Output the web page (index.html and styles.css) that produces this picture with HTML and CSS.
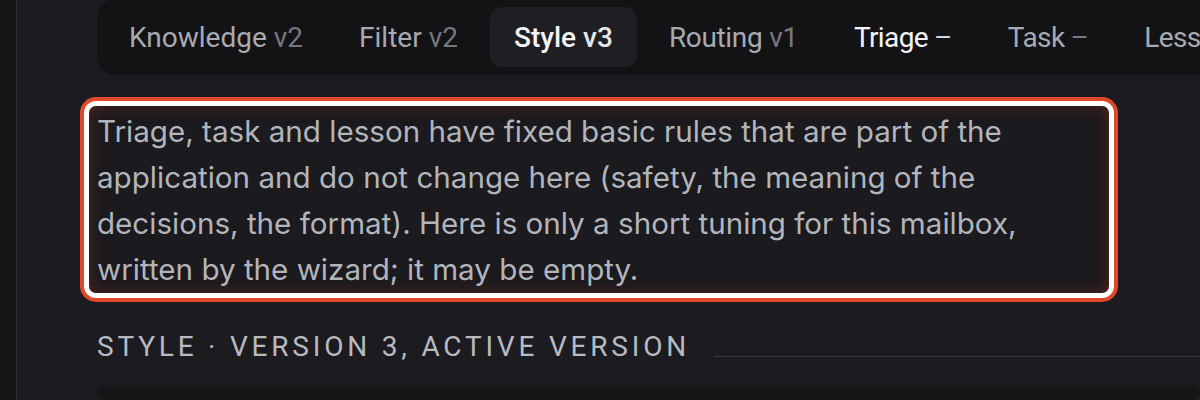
FILE: index.html
```html
<!DOCTYPE html>
<html lang="en">
<head>
<meta charset="utf-8">
<title>Prompts</title>
<link rel="stylesheet" href="styles.css">
</head>
<body>
<div class="app">
  <aside class="sidebar"></aside>
  <main class="main">
    <nav class="tabs">
      <div class="tab">Knowledge <span class="ver">v2</span></div>
      <div class="tab">Filter <span class="ver">v2</span></div>
      <div class="tab active">Style <span class="ver">v3</span></div>
      <div class="tab narrow">Routing <span class="ver">v1</span></div>
      <div class="tab strong dash">Triage <span class="ver">–</span></div>
      <div class="tab dash">Task <span class="ver">–</span></div>
      <div class="tab dash">Lesson <span class="ver">–</span></div>
    </nav>
    <p class="note">Triage, task and lesson have fixed basic rules that are part of the application and do not change here (safety, the meaning of the decisions, the format). Here is only a short tuning for this mailbox, written by the wizard; it may be empty.</p>
    <div class="section-head">
      <h2 class="section-title">Style · Version 3, active version</h2>
      <div class="rule"></div>
    </div>
    <div class="card"></div>
  </main>
</div>
</body>
</html>
```

FILE: styles.css
```css
* { box-sizing: border-box; }
html, body { margin: 0; padding: 0; }
body {
  background: #1c1b20;
  color: #b3b6bd;
  font-family: "Inter", "Noto Sans", sans-serif;
  overflow: hidden;
  height: 400px;
}
.app {
  display: flex;
  height: 400px;
  overflow: hidden;
}
.sidebar {
  width: 17px;
  flex: none;
  background: #161619;
  border-right: 1px solid #2e2e33;
}
.main {
  flex: 1;
  min-width: 0;
  padding-left: 80px;
  display: flex;
  flex-direction: column;
  overflow: hidden;
}
.tabs {
  display: flex;
  gap: 8px;
  padding: 8px;
  background: #131316;
  border-radius: 18px;
  width: max-content;
  font-family: "Roboto", "Liberation Sans", sans-serif;
  font-size: 28px;
  margin-top: -1px;
}
.tab {
  height: 60px;
  display: flex;
  align-items: center;
  gap: 7px;
  padding: 0 24px;
  border-radius: 12px;
  color: #a7aab1;
  white-space: nowrap;
}
.tab.narrow { letter-spacing: -0.35px; }
.tab.dash { letter-spacing: -0.6px; gap: 6px; }
.tab .ver { color: #75787f; }
.tab.active {
  background: #1f1f23;
  color: #f4f4f6;
  font-weight: 500;
}
.tab.active .ver { color: #e6e7ea; }
.tab.strong { color: #f4f4f6; }
.tab.strong .ver { color: #d4d6da; }
.note {
  margin: 31px 0 0 -8px;
  width: 1020px;
  padding: 2px 8px 1px;
  font-size: 29.6px;
  line-height: 46px;
  color: #b2b5bc;
  background: #1b1a1e;
  border-radius: 7px;
  box-shadow:
    inset 0 0 16px rgba(150, 45, 30, 0.45),
    0 0 0 5px #ffffff,
    0 0 0 9px #e1482b;
}
.section-head {
  display: flex;
  align-items: center;
  gap: 24px;
  margin-top: 36px;
}
.section-title {
  margin: 0;
  font-family: "Roboto", "Liberation Sans", sans-serif;
  font-weight: 400;
  font-size: 28px;
  line-height: 36px;
  letter-spacing: 3.8px;
  text-transform: uppercase;
  color: #b7bac1;
  white-space: nowrap;
}
.rule {
  flex: 1;
  height: 1px;
  background: #3b3c41;
  margin-top: 19px;
}
.card {
  margin-top: 20px;
  height: 120px;
  background: #161619;
  border-radius: 16px;
}
```
